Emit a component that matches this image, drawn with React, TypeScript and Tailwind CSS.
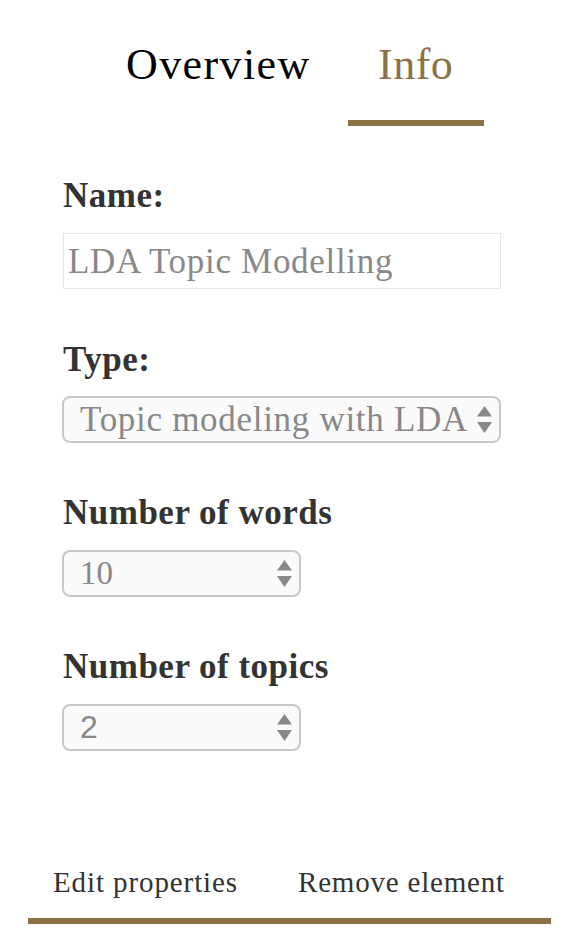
import React from "react";

const serif = "font-['Liberation_Serif',serif]";

function Arrows() {
  return (
    <svg width="15" height="28" viewBox="0 0 15 28" className="shrink-0">
      <polygon points="7.5,0 15,10.5 0,10.5" fill="#888888" />
      <polygon points="0,16 15,16 7.5,27" fill="#888888" />
    </svg>
  );
}

function SelectBox({
  value,
  width,
  sans,
  size,
}: {
  value: string;
  width: string;
  sans?: boolean;
  size: string;
}) {
  return (
    <div
      className={`${width} h-[47px] flex items-center justify-between rounded-[8px] border-2 border-[#c8c8c8] bg-[#fafafa] pl-[16px] pr-[7px]`}
    >
      <span
        className={`${sans ? "font-['Liberation_Sans',sans-serif]" : serif} ${size} leading-[47px] text-[#888888] whitespace-nowrap`}
      >
        {value}
      </span>
      <Arrows />
    </div>
  );
}

function Label({ children }: { children: React.ReactNode }) {
  return (
    <div className={`${serif} text-[35px] leading-[40px] font-bold tracking-[0.5px] text-[#333333]`}>
      {children}
    </div>
  );
}

export default function App() {
  return (
    <div className={`w-[584px] h-[952px] bg-white ${serif} overflow-hidden`}>
      {/* Tabs */}
      <div className="flex ml-[96px] gap-[7px] pt-[37px]">
        <div className="px-[30px] pb-[33px] text-[44px] leading-[56px] tracking-[1.4px] text-black">
          Overview
        </div>
        <div className="w-[136px] flex justify-center pb-[27px] border-b-[6px] border-[#8b7146] text-[44px] leading-[56px] tracking-[0.5px] text-[#8b7146]">
          Info
        </div>
      </div>

      <div className="pl-[63px] flex flex-col">
        <div className="mt-[50px]">
          <Label>Name:</Label>
        </div>
        <div className="mt-[17px] w-[438px] h-[56px] border border-[#e6e6e6] pl-[4px] flex items-center">
          <span className="text-[35px] leading-[40px] tracking-[0.7px] text-[#888888] pt-[2px]">LDA Topic Modelling</span>
        </div>

        <div className="mt-[51px]">
          <Label>Type:</Label>
        </div>
        <div className="mt-[16px] -ml-[1px]">
          <SelectBox value="Topic modeling with LDA" width="w-[439px]" size="text-[35px] tracking-[0.7px]" />
        </div>

        <div className="mt-[50px]">
          <Label>Number of words</Label>
        </div>
        <div className="mt-[17px] -ml-[1px]">
          <SelectBox value="10" width="w-[239px]" size="text-[33px]" />
        </div>

        <div className="mt-[50px]">
          <Label>Number of topics</Label>
        </div>
        <div className="mt-[17px] -ml-[1px]">
          <SelectBox value="2" width="w-[239px]" size="text-[32px]" sans />
        </div>
      </div>

      {/* Bottom nav */}
      <div className="mt-[113px] ml-[28px] w-[523px] flex gap-[10px] border-b-[6px] border-[#8b7146] pb-[18px]">
        <div className="px-[25px] text-[29px] leading-[36px] tracking-[0.9px] text-[#333333] whitespace-nowrap">
          Edit properties
        </div>
        <div className="px-[25px] text-[29px] leading-[36px] tracking-[0.8px] text-[#333333] whitespace-nowrap">
          Remove element
        </div>
      </div>
    </div>
  );
}
